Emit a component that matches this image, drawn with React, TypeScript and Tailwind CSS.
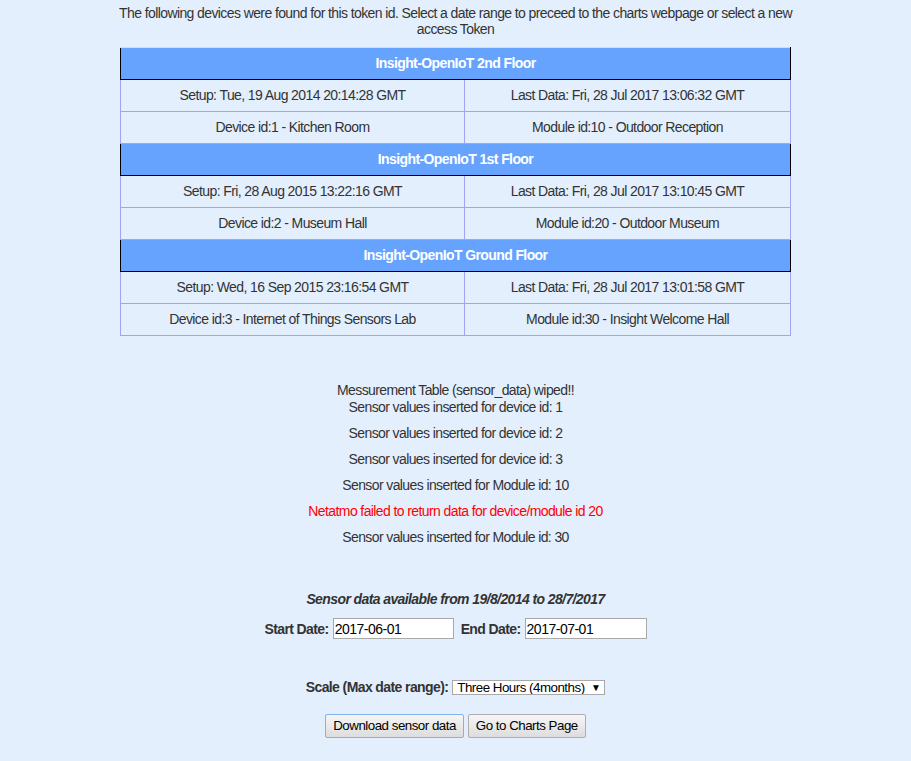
import React from "react";

const floors = [
  {
    name: "Insight-OpenIoT 2nd Floor",
    setup: "Setup: Tue, 19 Aug 2014 20:14:28 GMT",
    last: "Last Data: Fri, 28 Jul 2017 13:06:32 GMT",
    device: "Device id:1 - Kitchen Room",
    module: "Module id:10 - Outdoor Reception",
  },
  {
    name: "Insight-OpenIoT 1st Floor",
    setup: "Setup: Fri, 28 Aug 2015 13:22:16 GMT",
    last: "Last Data: Fri, 28 Jul 2017 13:10:45 GMT",
    device: "Device id:2 - Museum Hall",
    module: "Module id:20 - Outdoor Museum",
  },
  {
    name: "Insight-OpenIoT Ground Floor",
    setup: "Setup: Wed, 16 Sep 2015 23:16:54 GMT",
    last: "Last Data: Fri, 28 Jul 2017 13:01:58 GMT",
    device: "Device id:3 - Internet of Things Sensors Lab",
    module: "Module id:30 - Insight Welcome Hall",
  },
];

const td = "border border-[#a3a3f5] h-[32px] text-center px-0 pt-0 pb-[2px] align-middle";

export default function App() {
  return (
    <div
      className="min-h-[761px] w-full bg-[#e3effd] text-[#333333] text-[14px] leading-[16px] tracking-[-0.6px]"
      style={{ fontFamily: '"Liberation Sans", Arial, sans-serif' }}
    >
      <div className="flex flex-col items-center pt-[5px]">
        <p className="w-[680px] text-center">
          The following devices were found for this token id. Select a date range to preceed to the charts webpage or select a new access Token
        </p>

        <table className="mt-[10px] w-[671px] border-collapse">
          <tbody>
            {floors.map((f) => (
              <React.Fragment key={f.name}>
                <tr>
                  <th
                    colSpan={2}
                    className="h-[32px] pb-[2px] bg-[#66a3ff] text-white font-bold text-center border-t border-t-[#dcdcdc] border-l border-l-black border-r border-r-black border-b border-b-black px-0 pt-0"
                  >
                    {f.name}
                  </th>
                </tr>
                <tr>
                  <td className={td + " w-[344px]"}>{f.setup}</td>
                  <td className={td}>{f.last}</td>
                </tr>
                <tr>
                  <td className={td}>{f.device}</td>
                  <td className={td}>{f.module}</td>
                </tr>
              </React.Fragment>
            ))}
          </tbody>
        </table>

        <div className="mt-[46px] text-center leading-[17px]">
          <div>Messurement Table (sensor_data) wiped!!</div>
          <div>Sensor values inserted for device id: 1</div>
          <div className="mt-[9px]">Sensor values inserted for device id: 2</div>
          <div className="mt-[9px]">Sensor values inserted for device id: 3</div>
          <div className="mt-[9px]">Sensor values inserted for Module id: 10</div>
          <div className="mt-[9px] text-[#ff0000]">Netatmo failed to return data for device/module id 20</div>
          <div className="mt-[9px]">Sensor values inserted for Module id: 30</div>
        </div>

        <div className="mt-[45px] font-bold italic leading-[17px]">
          Sensor data available from 19/8/2014 to 28/7/2017
        </div>

        <div className="mt-[10px] flex items-center gap-[4px]">
          <span className="font-bold">Start Date:</span>
          <input
            defaultValue="2017-06-01"
            className="w-[121px] h-[21px] border border-[#a9a9a9] bg-white px-[1px] text-[14px] tracking-[-0.5px] text-black outline-none"
          />
          <span className="ml-[3px] font-bold">End Date:</span>
          <input
            defaultValue="2017-07-01"
            className="w-[122px] h-[21px] border border-[#a9a9a9] bg-white px-[1px] text-[14px] tracking-[-0.5px] text-black outline-none"
          />
        </div>

        <div className="mt-[40px] flex items-center gap-[4px]">
          <span className="font-bold">Scale (Max date range):</span>
          <span className="relative inline-block">
            <select
              defaultValue="3h"
              className="appearance-none block w-[153px] h-[15px] border border-[#a9a9a9] bg-white pl-[4px] text-[13.33px] leading-[13px] tracking-[-0.5px] text-black outline-none"
            >
              <option value="3h">Three Hours (4months)</option>
            </select>
            <span className="pointer-events-none absolute right-[5px] top-[1px] text-[10px] leading-[13px] text-black">▼</span>
          </span>
        </div>

        <div className="mt-[19px] flex items-center gap-[4px] text-[13.33px] tracking-[-0.5px]">
          <button className="h-[24px] px-[7px] rounded-[2px] border border-[#7eb4ea] bg-gradient-to-b from-[#f6f6f6] to-[#dddddd] text-black">
            Download sensor data
          </button>
          <button className="h-[24px] px-[7px] rounded-[2px] border border-[#adadad] bg-gradient-to-b from-[#f6f6f6] to-[#dddddd] text-black">
            Go to Charts Page
          </button>
        </div>
      </div>
    </div>
  );
}
